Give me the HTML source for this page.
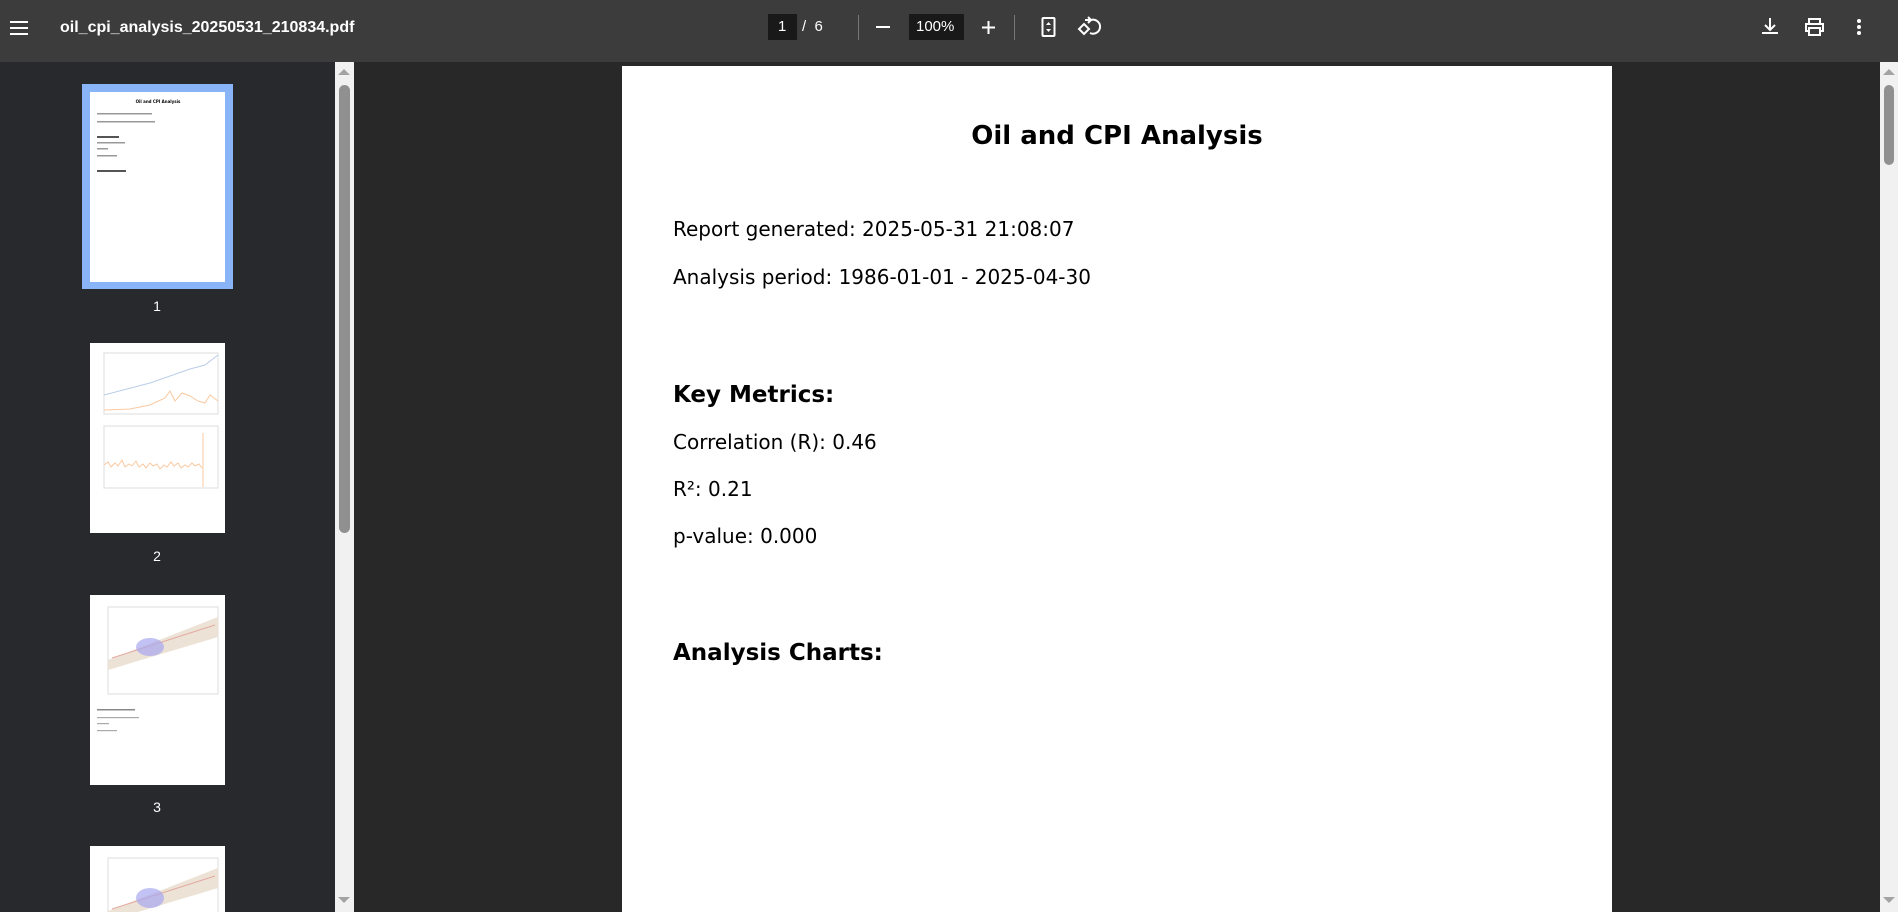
<!DOCTYPE html>
<html style="width:1898px;height:912px;overflow:hidden;background:#282828"><head><meta charset="utf-8"><style>
*{margin:0;padding:0;box-sizing:border-box}
body{width:1898px;height:912px;overflow:hidden;background:#282828;position:relative;font-family:"DejaVu Sans","Liberation Sans",sans-serif}
.abs{position:absolute}
#tb{left:0;top:0;width:1898px;height:62px;background:#3c3c3c}
.fn{left:60px;top:19px;font:bold 16px "Liberation Sans",sans-serif;color:#fff;white-space:nowrap}
.wt{color:#fff;font-family:"Liberation Sans",sans-serif;font-size:15px}
#side{left:0;top:62px;width:335px;height:850px;background:#28292c}
.sb{background:#f1f1f1}
.thumb{background:#fff;position:absolute;left:90px;width:135px}
.lbl{position:absolute;left:0;width:314px;text-align:center;color:#fff;font:14px "Liberation Sans",sans-serif}
#page{left:622px;top:66px;width:990px;height:846px;background:#fff}
.t{position:absolute;color:#000;white-space:nowrap;font-family:"DejaVu Sans",sans-serif}
</style></head><body>
<div id="tb" class="abs">
  <svg class="abs" style="left:10px;top:18px" width="20" height="20"><path d="M0 4h18M0 10h18M0 16h18" stroke="#fff" stroke-width="2"/></svg>
  <div class="abs fn">oil_cpi_analysis_20250531_210834.pdf</div>
  <div class="abs" style="left:768px;top:14px;width:29px;height:26px;background:#191919"></div>
  <div class="abs wt" style="left:778px;top:18px">1</div>
  <div class="abs wt" style="left:802px;top:18px">/&nbsp;&nbsp;6</div>
  <div class="abs" style="left:858px;top:15px;width:1px;height:25px;background:#777"></div>
  <div class="abs" style="left:876px;top:26px;width:14px;height:2px;background:#fff"></div>
  <div class="abs" style="left:909px;top:14px;width:55px;height:26px;background:#191919"></div>
  <div class="abs wt" style="left:916px;top:18px">100%</div>
  <svg class="abs" style="left:981px;top:20px" width="15" height="15"><path d="M7.5 1v13M1 7.5h13" stroke="#fff" stroke-width="2"/></svg>
  <div class="abs" style="left:1014px;top:15px;width:1px;height:25px;background:#777"></div>
  <svg class="abs" style="left:1040px;top:16px" width="18" height="23"><rect x="2.5" y="2" width="12" height="18" rx="1" fill="none" stroke="#fff" stroke-width="2"/><path d="M6 9l2.5-3 2.5 3zM6 13l2.5 3 2.5-3z" fill="#fff"/></svg>
  <svg class="abs" style="left:1077px;top:16px" width="24" height="22"><path d="M8 4h6a7 7 0 1 1-1 13" fill="none" stroke="#fff" stroke-width="2"/><path d="M11 1l3 3-3 3" fill="none" stroke="#fff" stroke-width="2"/><path d="M7 8l5 5-5 5-5-5z" fill="none" stroke="#fff" stroke-width="2"/></svg>
  <svg class="abs" style="left:1760px;top:16px" width="20" height="20"><path d="M10 2v12M5 9l5 5 5-5M2 17h16" fill="none" stroke="#fff" stroke-width="2"/></svg>
  <svg class="abs" style="left:1803px;top:17px" width="23" height="20"><path d="M6 6V2h11v4M6 14H3V7h17v7h-3M6 11h11v7H6z" fill="none" stroke="#fff" stroke-width="2"/></svg>
  <svg class="abs" style="left:1855px;top:18px" width="8" height="18"><circle cx="4" cy="3" r="2" fill="#fff"/><circle cx="4" cy="9" r="2" fill="#fff"/><circle cx="4" cy="15" r="2" fill="#fff"/></svg>
</div>
<div id="side" class="abs">
  <div class="abs" style="left:82px;top:22px;width:151px;height:205px;background:#8ab4f8"></div>
  <div class="thumb" style="top:30px;height:190px">
    <svg width="135" height="190"><text x="68" y="11" font-size="4" font-weight="bold" text-anchor="middle" font-family="DejaVu Sans">Oil and CPI Analysis</text>
    <rect x="7" y="21" width="55" height="1.5" fill="#999"/><rect x="7" y="29" width="58" height="1.5" fill="#999"/>
    <rect x="7" y="44" width="22" height="2" fill="#555"/><rect x="7" y="50" width="28" height="1.5" fill="#999"/><rect x="7" y="56" width="11" height="1.5" fill="#999"/><rect x="7" y="63" width="20" height="1.5" fill="#999"/>
    <rect x="7" y="78" width="29" height="2" fill="#555"/></svg>
  </div>
  <div class="lbl" style="top:236px">1</div>
  <div class="thumb" style="top:281px;height:190px">
    <svg width="135" height="190"><rect x="14" y="10" width="114" height="61" fill="none" stroke="#ddd"/><path d="M14 52L60 40 100 26 115 22 128 12" stroke="#b9cde8" fill="none"/><path d="M14 67L40 66 60 62 75 55 80 48 85 58 92 50 100 53 108 58 115 60 120 52 128 58" stroke="#f9c9a0" fill="none"/>
    <rect x="14" y="83" width="114" height="62" fill="none" stroke="#ddd"/><path d="M14 122l4-3 3 5 4-4 3 3 4-6 3 7 4-3 3 2 4-5 3 6 4-3 3 4 4-5 3 3 4-2 3 5 4-4 3 2 4-5 3 4 4-3 3 5 4-3 3 2 4-4 3 3 4-2 3 4" stroke="#f9c9a0" fill="none"/><path d="M113 90v54" stroke="#f9c9a0"/></svg>
  </div>
  <div class="lbl" style="top:486px">2</div>
  <div class="thumb" style="top:533px;height:190px">
    <svg width="135" height="190"><rect x="18" y="12" width="110" height="87" fill="none" stroke="#ddd"/><path d="M18 65L128 22V42L18 75z" fill="#ece2d6"/><path d="M22 63L125 30" stroke="#e4a9a0"/><ellipse cx="60" cy="52" rx="14" ry="9" fill="#a8a8f0" opacity=".7"/>
    <rect x="7" y="114" width="38" height="1.5" fill="#888"/><rect x="7" y="122" width="42" height="1.2" fill="#aaa"/><rect x="7" y="128" width="12" height="1.2" fill="#aaa"/><rect x="7" y="135" width="20" height="1.2" fill="#aaa"/></svg>
  </div>
  <div class="lbl" style="top:737px">3</div>
  <div class="thumb" style="top:784px;height:66px">
    <svg width="135" height="66"><rect x="18" y="12" width="110" height="87" fill="none" stroke="#ddd"/><path d="M18 65L128 22V42L18 75z" fill="#ece2d6"/><path d="M22 63L125 30" stroke="#e4a9a0"/><ellipse cx="60" cy="52" rx="14" ry="10" fill="#a8a8f0" opacity=".7"/></svg>
  </div>
</div>
<div class="abs sb" style="left:335px;top:62px;width:19px;height:850px"></div>
<svg class="abs" style="left:337px;top:68px" width="14" height="8"><path d="M1 7L7 1l6 6z" fill="#a3a3a3"/></svg>
<div class="abs" style="left:339px;top:85px;width:11px;height:448px;border-radius:6px;background:#909090"></div>
<svg class="abs" style="left:337px;top:896px" width="14" height="8"><path d="M1 1l6 6 6-6z" fill="#a3a3a3"/></svg>
<div id="page" class="abs">
  <div class="t" style="left:0;width:990px;text-align:center;top:55px;font-size:26px;font-weight:bold">Oil and CPI Analysis</div>
  <div class="t" style="left:51px;top:151px;font-size:20px">Report generated: 2025-05-31 21:08:07</div>
  <div class="t" style="left:51px;top:199px;font-size:20px">Analysis period: 1986-01-01 - 2025-04-30</div>
  <div class="t" style="left:51px;top:316px;font-size:23px;font-weight:bold">Key Metrics:</div>
  <div class="t" style="left:51px;top:364px;font-size:20px">Correlation (R): 0.46</div>
  <div class="t" style="left:51px;top:411px;font-size:20px">R²: 0.21</div>
  <div class="t" style="left:51px;top:458px;font-size:20px">p-value: 0.000</div>
  <div class="t" style="left:51px;top:574px;font-size:23px;font-weight:bold">Analysis Charts:</div>
</div>
<div class="abs sb" style="left:1880px;top:62px;width:18px;height:850px"></div>
<svg class="abs" style="left:1882px;top:68px" width="14" height="8"><path d="M1 7L7 1l6 6z" fill="#a3a3a3"/></svg>
<div class="abs" style="left:1884px;top:85px;width:10px;height:80px;border-radius:5px;background:#909090"></div>
<svg class="abs" style="left:1882px;top:896px" width="14" height="8"><path d="M1 1l6 6 6-6z" fill="#a3a3a3"/></svg>
</body></html>
